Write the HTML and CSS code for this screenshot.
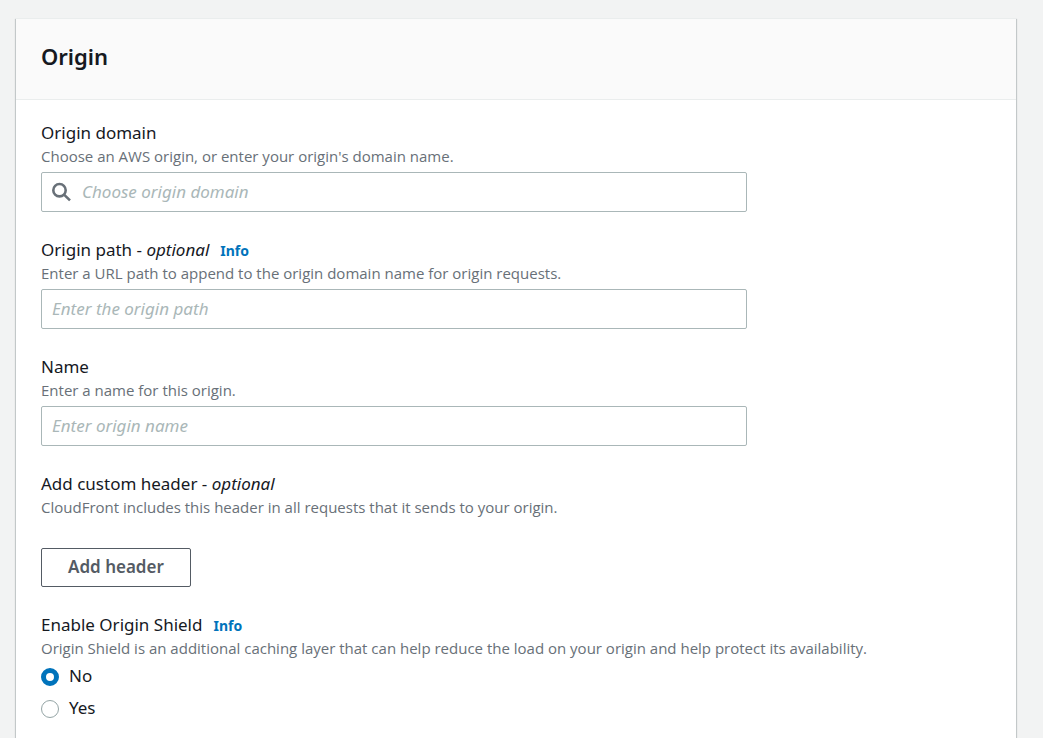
FILE: index.html
```html
<!DOCTYPE html>
<html lang="en">
<head>
  <meta charset="UTF-8">
  <meta name="viewport" content="width=device-width, initial-scale=1.0">
  <title>Origin</title>
  <link rel="stylesheet" href="styles.css">
</head>
<body>
  <form class="panel">
    <header class="panel-header">
      <h2>Origin</h2>
    </header>

    <div class="panel-body">
      <div class="field">
        <label class="field-label" for="origin-domain">Origin domain</label>
        <p class="hint">Choose an AWS origin, or enter your origin's domain name.</p>
        <div class="text-box">
          <svg class="search-icon" viewBox="0 0 20 20" aria-hidden="true">
            <circle cx="7.5" cy="8.2" r="6.2"/>
            <path d="M12 12.6 L18 18.4"/>
          </svg>
          <input type="text" id="origin-domain" placeholder="Choose origin domain">
        </div>
      </div>

      <div class="field">
        <div class="label-row">
          <label class="field-label" for="origin-path">Origin path - <em>optional</em></label>
          <a class="info" href="#">Info</a>
        </div>
        <p class="hint">Enter a URL path to append to the origin domain name for origin requests.</p>
        <div class="text-box">
          <input type="text" id="origin-path" placeholder="Enter the origin path">
        </div>
      </div>

      <div class="field">
        <label class="field-label" for="origin-name">Name</label>
        <p class="hint">Enter a name for this origin.</p>
        <div class="text-box">
          <input type="text" id="origin-name" placeholder="Enter origin name">
        </div>
      </div>

      <div class="field">
        <div class="field-label">Add custom header - <em>optional</em></div>
        <p class="hint">CloudFront includes this header in all requests that it sends to your origin.</p>
        <button type="button" class="btn">Add header</button>
      </div>

      <div class="field" role="radiogroup" aria-labelledby="shield-label">
        <div class="label-row">
          <span class="field-label" id="shield-label">Enable Origin Shield</span>
          <a class="info" href="#">Info</a>
        </div>
        <p class="hint">Origin Shield is an additional caching layer that can help reduce the load on your origin and help protect its availability.</p>
        <div class="radio-list">
          <label class="radio"><input type="radio" name="shield" value="no" checked>No</label>
          <label class="radio"><input type="radio" name="shield" value="yes">Yes</label>
        </div>
      </div>
    </div>
  </form>
</body>
</html>
```
FILE: styles.css
```css
:root {
  --page: #f2f3f3;
  --text: #16191f;
  --muted: #687078;
  --border: #aab7b8;
  --blue: #0073bb;
}

* {
  box-sizing: border-box;
}

body {
  margin: 0;
  padding: 18px 27px 0 16px;
  background: var(--page);
  color: var(--text);
  font-family: "Noto Sans", "Open Sans", sans-serif;
  font-size: 17px;
  line-height: 24px;
}

.panel {
  background: #fff;
  border-top: 1px solid #eaeded;
  box-shadow: 0 1px 1px 0 rgba(0, 28, 36, 0.3), 1px 1px 1px 0 rgba(0, 28, 36, 0.15), -1px 1px 1px 0 rgba(0, 28, 36, 0.15);
}

.panel-header {
  padding: 21px 25px 27px;
  background: #fafafa;
  border-bottom: 1px solid #eaeded;
}

.panel-header h2 {
  margin: 0;
  font-size: 22px;
  font-weight: 600;
  line-height: 32px;
}

.panel-body {
  display: flex;
  flex-direction: column;
  gap: 26px;
  padding: 21px 25px 26px;
}

.label-row {
  display: flex;
  align-items: baseline;
  gap: 11px;
}

.field-label {
  display: block;
}

.info {
  color: var(--blue);
  font-size: 14px;
  font-weight: bold;
  line-height: 20px;
  text-decoration: none;
}

.info:hover {
  text-decoration: underline;
}

.hint {
  margin: 0 0 5px;
  color: var(--muted);
  font-family: "Open Sans", "Noto Sans", sans-serif;
  font-size: 15px;
  line-height: 22px;
}

.text-box {
  display: flex;
  align-items: center;
  gap: 10px;
  max-width: 706px;
  height: 40px;
  padding: 0 10px;
  border: 1px solid var(--border);
  border-radius: 2px;
}

.text-box:focus-within {
  border-color: var(--blue);
}

.text-box input {
  flex: 1;
  min-width: 0;
  padding: 0;
  border: none;
  outline: none;
  background: none;
  color: var(--text);
  font: inherit;
}

.text-box input::placeholder {
  color: var(--border);
  font-style: italic;
  opacity: 1;
}

.search-icon {
  width: 20px;
  height: 20px;
  fill: none;
  stroke: var(--muted);
  stroke-width: 2.6;
}

.btn {
  height: 39px;
  margin-top: 25px;
  padding: 0 26px 2px;
  border: 1px solid #545b64;
  border-radius: 2px;
  background: #fff;
  color: #545b64;
  font: inherit;
  font-weight: 600;
  cursor: pointer;
}

.radio-list {
  display: flex;
  flex-direction: column;
  align-items: flex-start;
  gap: 8px;
}

.radio {
  display: flex;
  align-items: center;
  gap: 10px;
}

.radio input {
  appearance: none;
  width: 18px;
  height: 18px;
  margin: 2px 0 0;
  border: 1px solid #95a5a6;
  border-radius: 50%;
  background: #fff;
}

.radio input:checked {
  border: 5px solid var(--blue);
}
```
